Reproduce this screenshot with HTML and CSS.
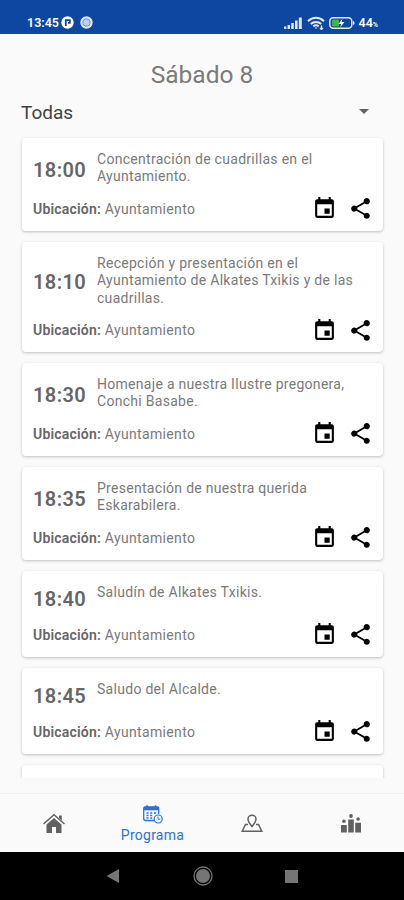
FILE: index.html
```
<!DOCTYPE html>
<html lang="es">

<head>
    <meta charset="UTF-8">
    <meta name="viewport" content="width=device-width, initial-scale=1">
    <title>Programa</title>
    <link rel="stylesheet" href="styles.css">
</head>

<body>
    <svg class="sprite" width="0" height="0">
        <symbol id="event" viewBox="0 0 24 24">
            <path d="M17 12h-5v5h5v-5zM16 1v2H8V1H6v2H5c-1.1 0-2 .9-2 2v14c0 1.1.9 2 2 2h14c1.1 0 2-.9 2-2V5c0-1.1-.9-2-2-2h-1V1h-2zm3 18H5V8h14v11z"/>
        </symbol>
        <symbol id="share" viewBox="0 0 24 24">
            <path d="M18 16.08c-.76 0-1.44.3-1.96.77L8.91 12.7c.05-.23.09-.46.09-.7s-.04-.47-.09-.7l7.05-4.11c.54.5 1.25.81 2.04.81 1.66 0 3-1.34 3-3s-1.34-3-3-3-3 1.34-3 3c0 .24.04.47.09.7L8.04 9.81C7.5 9.31 6.79 9 6 9c-1.66 0-3 1.34-3 3s1.34 3 3 3c.79 0 1.5-.31 2.04-.81l7.12 4.16c-.05.21-.08.43-.08.65 0 1.61 1.31 2.92 2.92 2.92s2.92-1.31 2.92-2.92-1.31-2.92-2.92-2.92z"/>
        </symbol>
    </svg>

    <header class="status">
        <span class="clock">13:45</span>
        <svg width="13" height="13" viewBox="0 0 13 13">
            <circle cx="6.5" cy="6.5" r="6.2" fill="#fff"/>
            <path d="M4.800 10V4.200h4v2.600H7" fill="none" stroke="#0d47a1" stroke-width="1.800"/>
        </svg>
        <svg class="app" width="13" height="13" viewBox="0 0 13 13">
            <circle cx="6.5" cy="6.5" r="6.2" fill="#dbe4f4"/>
            <circle cx="6.5" cy="6.5" r="3.7" fill="#c3d0e8" stroke="#7592c8"/>
        </svg>
        <svg class="signal" width="18" height="12" viewBox="0 0 18 12" fill="#dfe7f5">
            <path d="M0 9.5h2.4V12H0zM3.6 8H6v4H3.6zM7.2 6h2.6v6H7.2zM11 3.5h2.6V12H11zM14.8 .5h3V12h-3z"/>
        </svg>
        <svg class="wifi" width="18" height="14" viewBox="0 0 18 14" fill="none" stroke="#e4ebf7" stroke-width="2">
            <path d="M1 5.2c4.600-4.500 11.400-4.500 16 0M3.800 8c3-2.800 7.400-2.800 10.400 0M6.300 10.400c1.600-1.300 3.800-1.300 5.400 0"/>
            <path d="M9 12.800v-1.600M14.500 9.500v4M13 12l1.500 1.500L16 12" stroke-width="1.300"/>
        </svg>
        <svg class="battery" width="26" height="12" viewBox="0 0 26 12">
            <rect x=".8" y=".8" width="22" height="10.400" rx="3.500" fill="none" stroke="#e4ebf7" stroke-width="1.500"/>
            <path d="M24 4c2 .5 2 3.500 0 4z" fill="#e4ebf7"/>
            <rect x="3" y="2.500" width="7" height="7" rx="1" fill="#45b63b"/>
            <path d="M13.500 1.500L9.500 7h2.800L11 10.500 15.500 5h-3z" fill="#fff"/>
        </svg>
        <span class="percent">44<small>%</small></span>
    </header>

    <main>
        <h1>Sábado 8</h1>
        <div class="filter">
            <span>Todas</span>
            <i class="arrow"></i>
        </div>

        <div class="list">
            <article class="card">
                <div class="info">
                    <b class="time">18:00</b>
                    <p>Concentración de cuadrillas en el<br>Ayuntamiento.</p>
                </div>
                <div class="place">
                    <span><b>Ubicación:</b> Ayuntamiento</span>
                    <svg class="icon"><use href="#event"/></svg>
                    <svg class="icon"><use href="#share"/></svg>
                </div>
            </article>
            <article class="card">
                <div class="info">
                    <b class="time">18:10</b>
                    <p>Recepción y presentación en el<br>Ayuntamiento de Alkates Txikis y de las<br>cuadrillas.</p>
                </div>
                <div class="place">
                    <span><b>Ubicación:</b> Ayuntamiento</span>
                    <svg class="icon"><use href="#event"/></svg>
                    <svg class="icon"><use href="#share"/></svg>
                </div>
            </article>
            <article class="card">
                <div class="info">
                    <b class="time">18:30</b>
                    <p>Homenaje a nuestra Ilustre pregonera,<br>Conchi Basabe.</p>
                </div>
                <div class="place">
                    <span><b>Ubicación:</b> Ayuntamiento</span>
                    <svg class="icon"><use href="#event"/></svg>
                    <svg class="icon"><use href="#share"/></svg>
                </div>
            </article>
            <article class="card">
                <div class="info">
                    <b class="time">18:35</b>
                    <p>Presentación de nuestra querida<br>Eskarabilera.</p>
                </div>
                <div class="place">
                    <span><b>Ubicación:</b> Ayuntamiento</span>
                    <svg class="icon"><use href="#event"/></svg>
                    <svg class="icon"><use href="#share"/></svg>
                </div>
            </article>
            <article class="card">
                <div class="info">
                    <b class="time">18:40</b>
                    <p>Saludín de Alkates Txikis.</p>
                </div>
                <div class="place">
                    <span><b>Ubicación:</b> Ayuntamiento</span>
                    <svg class="icon"><use href="#event"/></svg>
                    <svg class="icon"><use href="#share"/></svg>
                </div>
            </article>
            <article class="card">
                <div class="info">
                    <b class="time">18:45</b>
                    <p>Saludo del Alcalde.</p>
                </div>
                <div class="place">
                    <span><b>Ubicación:</b> Ayuntamiento</span>
                    <svg class="icon"><use href="#event"/></svg>
                    <svg class="icon"><use href="#share"/></svg>
                </div>
            </article>
            <article class="card next"></article>
        </div>
    </main>

    <nav class="tabs">
        <a class="tab">
            <svg width="22" height="20" viewBox="0 0 22 20">
                <path d="M3.500 11.500L11 5l7.500 6.500V20H13v-6H9v6H3.500z"/>
                <path d="M.5 11L11 1.700 21.500 11" fill="none" stroke="#616161" stroke-width="1.500"/>
                <path d="M16 2.500h2.800v5L16 5z"/>
            </svg>
        </a>
        <a class="tab active">
            <svg width="20" height="20" viewBox="0 0 20 20" fill="none" stroke="#2a71df">
                <path d="M11 15.500H2.500q-1.800 0-1.800-1.800V3.500q0-1.500 1.500-1.500h12q1.500 0 1.500 1.500V9" stroke-width="1.300"/>
                <path d="M1 3.600h14.500" stroke-width="3.400"/>
                <path d="M4 .3v3M12.500 .3v3" stroke-width="1.600"/>
                <path d="M3.500 8h2M7.200 8h2M11 8h2M3.500 10.500h2M7.200 10.500h2M3.500 13h2M7.200 13h2" stroke-width="1.700"/>
                <circle cx="15.200" cy="14" r="4" fill="#fafafa" stroke-width="1.200"/>
                <path d="M15 11.500v2.700h2.200"/>
            </svg>
            <span>Programa</span>
        </a>
        <a class="tab">
            <svg width="22" height="20" viewBox="0 0 22 20" fill="none" stroke="#616161" stroke-width="1.500">
                <path d="M11 13.500C9 10.800 7 8.700 7 6.200a4 4 0 0 1 8 0c0 2.500-2 4.600-4 7.300z"/>
                <path d="M7 11.500H4.500L1.200 18.200h19.600l-3.300-6.700H15"/>
            </svg>
        </a>
        <a class="tab">
            <svg width="22" height="20" viewBox="0 0 22 20">
                <path d="M1 12h5.800v7.500H1zM8.200 6.500h5.600v13H8.200zM15.200 9.800H21v9.700h-5.800z"/>
                <circle cx="3.900" cy="8.200" r="1.800"/>
                <circle cx="11" cy="3" r="1.900"/>
                <circle cx="18.100" cy="6" r="1.800"/>
            </svg>
        </a>
    </nav>

    <footer class="keys">
        <svg width="14" height="16" viewBox="0 0 14 16"><path d="M13 1v14L.5 8z" fill="#757575"/></svg>
        <svg width="20" height="20" viewBox="0 0 20 20">
            <circle cx="10" cy="10" r="9" fill="none" stroke="#757575" stroke-width="1.300"/>
            <circle cx="10" cy="10" r="7" fill="#757575"/>
        </svg>
        <i class="square"></i>
    </footer>
</body>

</html>
```
FILE: styles.css
```
* {
    padding: 0;
    margin: 0;
    box-sizing: border-box;
}

body {
    width: 404px;
    height: 900px;
    display: flex;
    flex-direction: column;
    overflow: hidden;
    background: #fafafa;
    color: #7a7a7a;
    font-family: Roboto, sans-serif;
}

svg {
    display: block;
    flex: none;
}

.sprite {
    position: absolute;
}

.status {
    height: 34px;
    padding: 11px 26px 0 27px;
    display: flex;
    align-items: center;
    background: #0d47a1;
    color: #fff;
    font-size: 12.5px;
    font-weight: 600;
}

.clock {
    width: 34px;
}

.app {
    margin-left: 6px;
}

.signal {
    margin-left: auto;
}

.wifi {
    margin-left: 5px;
}

.battery {
    margin: 0 4px 0 4px;
}

.percent small {
    font-size: 7px;
}

main {
    height: 759px;
    display: flex;
    flex-direction: column;
}

h1 {
    padding-top: 26px;
    line-height: 30px;
    font-size: 24.5px;
    font-weight: 400;
    text-align: center;
}

.filter {
    height: 40px;
    padding: 4px 35px 0 21px;
    display: flex;
    align-items: center;
    justify-content: space-between;
    color: #424242;
    font-size: 19px;
}

.arrow {
    margin-top: -1px;
    border: 5px solid transparent;
    border-top-color: #616161;
    border-bottom: 0;
}

.list {
    height: 648px;
    padding: 8px 21px 0 22px;
    display: flex;
    flex-direction: column;
    gap: 11px;
    overflow: hidden;
}

.card {
    flex: none;
    padding: 12px 11px 10px;
    border-radius: 4px;
    background: #fff;
    box-shadow: 0 1px 3px rgba(0, 0, 0, .24);
}

.next {
    height: 86px;
}

.info {
    min-height: 28px;
    display: flex;
    align-items: center;
}

.time {
    width: 64px;
    padding-top: 5px;
    line-height: 22px;
    color: #666;
    font-size: 20px;
    font-weight: 600;
    letter-spacing: .4px;
}

.info p {
    align-self: flex-start;
    position: relative;
    top: 1px;
    font-size: 14px;
    line-height: 17.4px;
    letter-spacing: .29px;
    white-space: nowrap;
}

.place {
    height: 24px;
    margin-top: 12px;
    display: flex;
    align-items: center;
    font-size: 14px;
    letter-spacing: .34px;
}

.place span {
    flex: 1;
}

.place b {
    color: #666;
    font-weight: 600;
    letter-spacing: .2px;
}

.icon {
    width: 25px;
    height: 25px;
    margin-right: -1px;
    fill: #000;
}

.icon + .icon {
    margin-left: 12px;
}

.tabs {
    height: 59px;
    padding: 0 4px;
    display: flex;
    border-top: 1px solid #f2f2f2;
    fill: #616161;
}

.tab {
    flex: 1;
    display: flex;
    flex-direction: column;
    align-items: center;
    justify-content: center;
}

.active {
    padding-top: 4px;
    color: #2a71df;
    font-size: 14px;
    line-height: 20px;
    letter-spacing: .25px;
}

.keys {
    height: 48px;
    padding: 0 106px;
    display: flex;
    align-items: center;
    justify-content: space-between;
    background: #000;
}

.square {
    width: 13px;
    height: 13px;
    background: #757575;
}
```
